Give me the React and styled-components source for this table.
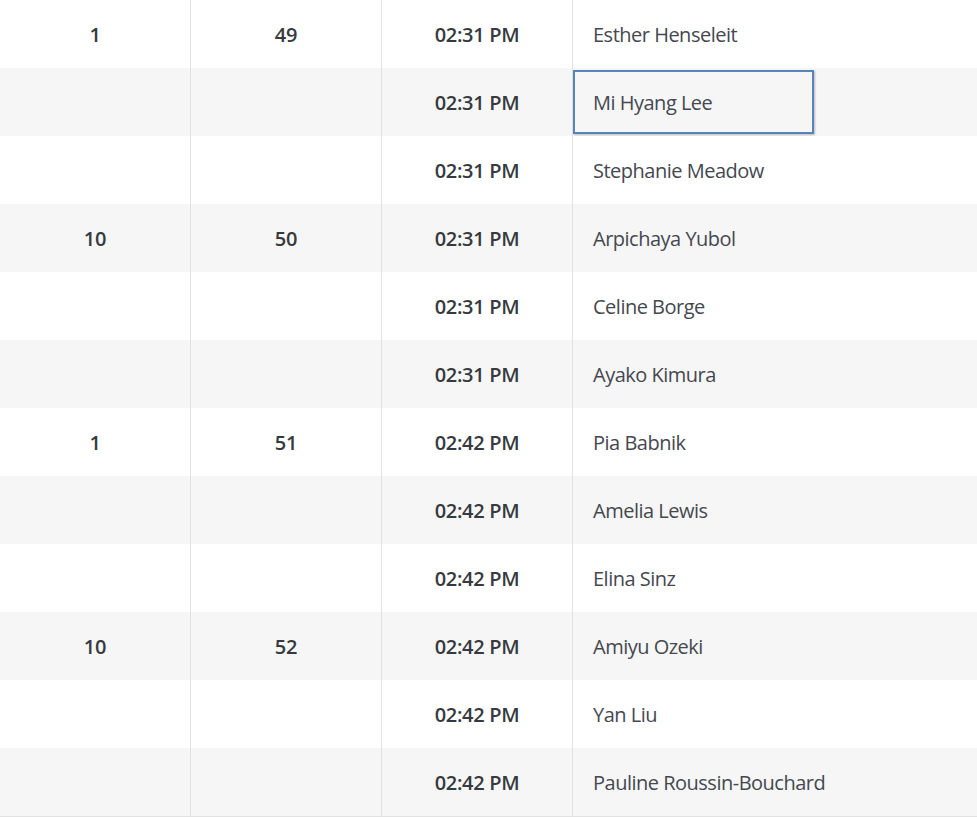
import React from "react";
import styled, { createGlobalStyle } from "styled-components";

const Global = createGlobalStyle`
  html, body { margin: 0; padding: 0; background: #fff; }
  body { font-family: "Open Sans", "Noto Sans", sans-serif; }
`;

const Table = styled.div`
  display: grid;
  grid-template-columns: 191px 191px 191px 1fr;
  width: 977px;
  border-bottom: 1px solid #e2e2e2;
`;

const Cell = styled.div`
  height: 68px;
  box-sizing: border-box;
  display: flex;
  align-items: center;
  justify-content: ${(p) => (p.$left ? "flex-start" : "center")};
  background: ${(p) => (p.$odd ? "#f6f6f6" : "#ffffff")};
  border-right: ${(p) => (p.$last ? "none" : "1px solid #e2e2e2")};
  color: #363a40;
  font-size: 20px;
  font-weight: 600;
  letter-spacing: -0.3px;
`;

const NameBox = styled.div`
  box-sizing: border-box;
  display: flex;
  align-items: center;
  height: ${(p) => (p.$selected ? "64px" : "68px")};
  width: ${(p) => (p.$selected ? "241px" : "auto")};
  padding-left: ${(p) => (p.$selected ? "18px" : "20px")};
  border: ${(p) => (p.$selected ? "2px solid #5584bf" : "none")};
  box-shadow: ${(p) => (p.$selected ? "1px 1px 2px rgba(0,0,0,0.25)" : "none")};
  color: #454850;
  font-weight: 400;
  font-size: 20px;
  letter-spacing: -0.5px;
`;

const rows = [
  ["1", "49", "02:31 PM", "Esther Henseleit"],
  ["", "", "02:31 PM", "Mi Hyang Lee", true],
  ["", "", "02:31 PM", "Stephanie Meadow"],
  ["10", "50", "02:31 PM", "Arpichaya Yubol"],
  ["", "", "02:31 PM", "Celine Borge"],
  ["", "", "02:31 PM", "Ayako Kimura"],
  ["1", "51", "02:42 PM", "Pia Babnik"],
  ["", "", "02:42 PM", "Amelia Lewis"],
  ["", "", "02:42 PM", "Elina Sinz"],
  ["10", "52", "02:42 PM", "Amiyu Ozeki"],
  ["", "", "02:42 PM", "Yan Liu"],
  ["", "", "02:42 PM", "Pauline Roussin-Bouchard"],
];

export default function App() {
  return (
    <>
      <Global />
      <Table>
        {rows.map(([a, b, t, name, sel], i) => {
          const odd = i % 2 === 1;
          return (
            <React.Fragment key={i}>
              <Cell $odd={odd}>{a}</Cell>
              <Cell $odd={odd}>{b}</Cell>
              <Cell $odd={odd}>{t}</Cell>
              <Cell $odd={odd} $left $last>
                <NameBox $selected={sel}>{name}</NameBox>
              </Cell>
            </React.Fragment>
          );
        })}
      </Table>
    </>
  );
}
